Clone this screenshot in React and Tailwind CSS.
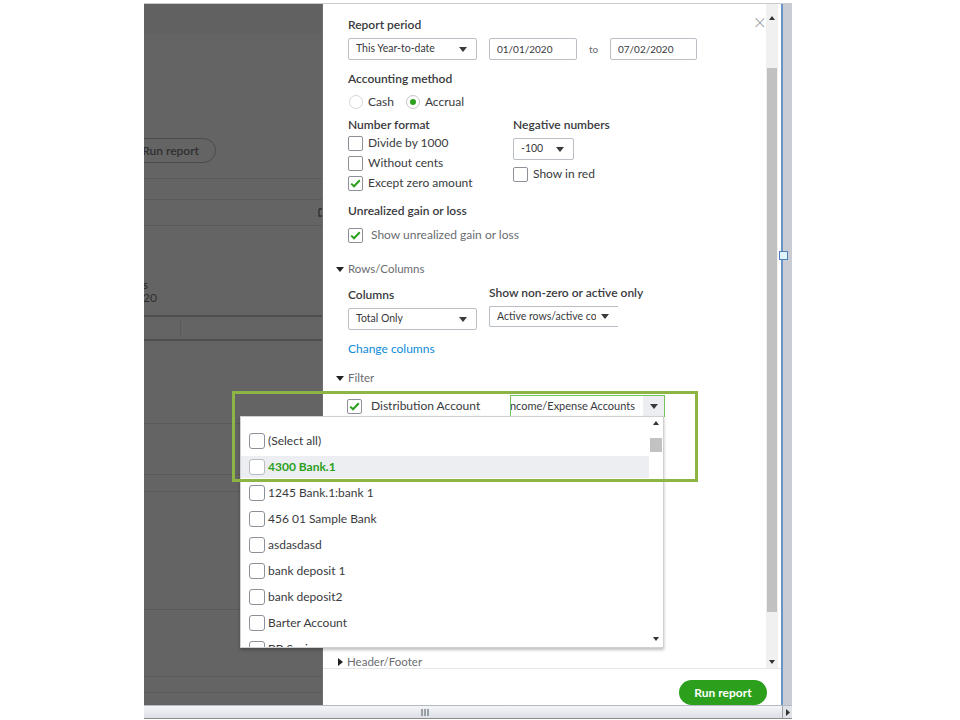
import React from "react"

const Caret = ({ color = "#393a3d" }) => (
  <svg width="8" height="5" viewBox="0 0 8 5" className="shrink-0">
    <path d="M0 0h8L4 5z" fill={color} />
  </svg>
)

const Check = ({ checked }) => (
  <span className="w-[15px] h-[15px] shrink-0 rounded-[2px] border border-[#8d9096] bg-white flex items-center justify-center">
    {checked && (
      <svg width="11" height="9" viewBox="0 0 11 9">
        <path d="M1.2 4.6 L4 7.3 L9.8 1.2" fill="none" stroke="#2ca01c" strokeWidth="2" />
      </svg>
    )}
  </span>
)

const Select = ({ label, className = "" }) => (
  <div className={`h-[22px] border border-[#babec5] rounded-[2px] bg-white flex items-center justify-between pl-[7px] pr-[9px] text-[10.5px] text-[#393a3d] ${className}`}>
    <span className="whitespace-nowrap overflow-hidden">{label}</span>
    <Caret />
  </div>
)

const Label = ({ children, className = "" }) => (
  <div className={`h-[14px] leading-[14px] text-[12px] font-semibold text-[#393a3d] whitespace-nowrap ${className}`}>{children}</div>
)

const CheckRow = ({ label, checked, className = "", textClass = "text-[#393a3d]" }) => (
  <div className={`flex items-center gap-[5px] ${className}`}>
    <Check checked={checked} />
    <span className={`text-[12px] whitespace-nowrap ${textClass}`}>{label}</span>
  </div>
)

const accounts = [
  "(Select all)",
  "4300 Bank.1",
  "1245 Bank.1:bank 1",
  "456 01 Sample Bank",
  "asdasdasd",
  "bank deposit 1",
  "bank deposit2",
  "Barter Account",
  "BB Savings",
]

export default function App() {
  return (
    <div className="relative w-[960px] h-[720px] bg-white overflow-hidden pl-[144px] pt-[3px] font-['Lato','Open_Sans',sans-serif]">
      {/* captured window */}
      <div className="w-[648px] flex flex-col border-t border-[#c9cbcf]">
        <div className="h-[701px] flex">
          {/* dimmed report behind the panel */}
          <div className="w-[178px] bg-[#646464] flex flex-col overflow-hidden text-[#2f2f2f]">
            <div className="h-[134px] border-t-[30px] border-[#616161]" />
            <div className="h-[25px] w-[96px] -ml-[24px] rounded-full border border-[#4b4b4b] flex items-center justify-end pr-[16px] text-[12px] font-semibold whitespace-nowrap">
              Run report
            </div>
            <div className="h-[16px] border-b border-[#5a5a5a]" />
            <div className="h-[21px] border-b border-[#5a5a5a]" />
            <div className="h-[26px] border-b border-[#5a5a5a] flex items-center justify-end -mr-[6px]">
              <svg width="10" height="9" viewBox="0 0 10 9">
                <path d="M1 1h5M1 1v7h7V5M5 5l4-4M6 1h3v3" fill="none" stroke="#2f2f2f" strokeWidth="1.3" />
              </svg>
            </div>
            <div className="h-[91px] border-b-2 border-[#4e4e4e] flex flex-col pt-[52px] text-[12px] leading-[13px]">
              <div className="-ml-[80px] w-[84px] text-right whitespace-nowrap font-semibold">Transactions</div>
              <div className="-ml-[80px] w-[93px] text-right whitespace-nowrap">07/02/2020</div>
            </div>
            <div className="h-[24px] border-b-2 border-[#4e4e4e] flex">
              <div className="w-[37px] border-r border-[#5a5a5a] my-[2px]" />
            </div>
            <div className="h-[83px] border-b border-[#5a5a5a]" />
            <div className="h-[51px] border-b border-[#5a5a5a]" />
            <div className="h-[17px] border-b border-[#5a5a5a]" />
            <div className="h-[118px] border-b border-[#5a5a5a]" />
            <div className="h-[67px] border-b border-[#5a5a5a]" />
            <div className="h-[16px] border-b border-[#5a5a5a]" />
          </div>

          {/* customize panel */}
          <div className="w-[459px] flex flex-col bg-white border-l border-[#6f6f6f]">
            <div className="h-[664px] flex">
              <div className="relative w-[443px] overflow-hidden pl-[25px] pt-[14px] flex flex-col">
                <div className="absolute right-0 top-[7px] text-[21px] leading-[21px] font-light text-[#8d9096]">×</div>

                <Label>Report period</Label>
                <div className="mt-[6px] flex items-center">
                  <Select label="This Year-to-date" className="w-[129px]" />
                  <div className="ml-[12px] w-[88px] h-[22px] border border-[#babec5] rounded-[2px] flex items-center pl-[7px] text-[10px] text-[#393a3d]">01/01/2020</div>
                  <div className="w-[33px] text-center text-[10px] text-[#6b6c72]">to</div>
                  <div className="w-[87px] h-[22px] border border-[#babec5] rounded-[2px] flex items-center pl-[7px] text-[10px] text-[#393a3d]">07/02/2020</div>
                </div>

                <Label className="mt-[12px]">Accounting method</Label>
                <div className="mt-[8px] h-[16px] flex items-center text-[12px] text-[#393a3d]">
                  <span className="ml-px w-[14px] h-[14px] rounded-full border border-[#d4d7dc]" />
                  <span className="ml-[5px]">Cash</span>
                  <span className="ml-[12px] w-[14px] h-[14px] rounded-full border border-[#c4c7cc] flex items-center justify-center">
                    <span className="w-[6px] h-[6px] rounded-full bg-[#2ca01c]" />
                  </span>
                  <span className="ml-[5px]">Accrual</span>
                </div>

                <div className="mt-[8px] flex">
                  <div className="w-[165px] flex flex-col">
                    <Label>Number format</Label>
                    <CheckRow className="mt-px h-[20px]" label="Divide by 1000" />
                    <CheckRow className="h-[20px]" label="Without cents" />
                    <CheckRow className="h-[20px]" label="Except zero amount" checked />
                  </div>
                  <div className="flex flex-col">
                    <Label>Negative numbers</Label>
                    <Select label="-100" className="mt-[6px] w-[61px]" />
                    <CheckRow className="mt-[5px]" label="Show in red" />
                  </div>
                </div>

                <Label className="mt-[11px]">Unrealized gain or loss</Label>
                <CheckRow className="mt-[9px] h-[16px] gap-[8px]" label="Show unrealized gain or loss" checked textClass="text-[#6b6c72]" />

                <div className="mt-[19px] h-[14px] -ml-[12px] flex items-center gap-[4px] text-[11.5px] text-[#6b6c72]">
                  <Caret color="#222" />
                  <span>Rows/Columns</span>
                </div>

                <div className="mt-[11px] flex">
                  <div className="w-[141px] flex flex-col">
                    <Label className="mt-px">Columns</Label>
                    <Select label="Total Only" className="mt-[6px] w-[129px]" />
                  </div>
                  <div className="flex flex-col">
                    <Label className="-mt-px">Show non-zero or active only</Label>
                    <div className="mt-[6px] w-[129px] h-[21px] border border-r-0 border-[#babec5] rounded-l-[2px] flex items-center pl-[7px] text-[10.5px] text-[#393a3d]">
                      <span className="w-[99px] whitespace-nowrap overflow-hidden">Active rows/active columns</span>
                      <span className="ml-[5px]"><Caret /></span>
                    </div>
                  </div>
                </div>

                <div className="mt-[12px] h-[14px] leading-[14px] text-[12px] text-[#0d8ad8]">Change columns</div>

                <div className="mt-[15px] h-[14px] -ml-[12px] flex items-center gap-[4px] text-[11.5px] text-[#6b6c72]">
                  <Caret color="#222" />
                  <span>Filter</span>
                </div>

                <div className="mt-[10px] h-[22px] flex items-center -ml-px">
                  <Check checked />
                  <span className="ml-[9px] w-[139px] text-[12px] text-[#393a3d] whitespace-nowrap">Distribution Account</span>
                  <div className="w-[155px] h-[22px] border border-[#74c45a] flex bg-white">
                    <div className="flex-1 overflow-hidden flex items-center justify-end pr-[8px] text-[11px] text-[#393a3d] whitespace-nowrap">
                      <span className="shrink-0">Income/Expense Accounts</span>
                    </div>
                    <div className="w-[21px] bg-[#eceef1] flex items-center justify-center">
                      <Caret />
                    </div>
                  </div>
                </div>
                <div className="mt-[9px] ml-[292px] w-[46px] h-px bg-[#d4d7dc]" />

                <div className="mt-[229px] h-[14px] -ml-[10px] flex items-center gap-[4px] text-[11.5px] text-[#6b6c72]">
                  <svg width="5" height="8" viewBox="0 0 5 8"><path d="M0 0l5 4-5 4z" fill="#222" /></svg>
                  <span>Header/Footer</span>
                </div>
              </div>

              {/* panel scrollbar */}
              <div className="w-[12px] bg-[#f0f0f0] flex flex-col items-center">
                <div className="h-[64px] pt-[12px]">
                  <svg width="6" height="4" viewBox="0 0 6 4"><path d="M0 4h6L3 0z" fill="#333" /></svg>
                </div>
                <div className="w-[10px] h-[544px] bg-[#c1c1c1]" />
                <div className="flex-1 flex items-end pb-[4px]">
                  <svg width="6" height="4" viewBox="0 0 6 4"><path d="M0 0h6L3 4z" fill="#333" /></svg>
                </div>
              </div>
              <div className="w-[3px]" />
            </div>

            <div className="h-[37px] border-t border-[#e6e7ea] flex justify-end items-start pt-[11px] pr-[14px]">
              <div className="w-[88px] h-[25px] rounded-full bg-[#2ca01c] flex items-center justify-center text-[12px] font-bold text-white">
                Run report
              </div>
            </div>
          </div>

          {/* window splitter */}
          <div className="w-[2px] bg-[#6a93c8]" />
          <div className="w-[9px] bg-[#c9ccd3]" />
        </div>

        {/* horizontal scrollbar */}
        <div className="h-[14px] flex border-t border-[#b5bac2] border-b border-b-[#8c8c8c]">
          <div className="w-[638px] bg-gradient-to-b from-[#f4f5f7] to-[#dde0e5] flex items-center pl-[277px]">
            <div className="w-[8px] h-[7px] border-x-2 border-[#9aa0a8] flex justify-center">
              <div className="w-[2px] border-x border-[#9aa0a8]" />
            </div>
          </div>
          <div className="w-[10px] bg-[#dfe2e6] border-l border-[#9aa0a8] flex items-center justify-center">
            <svg width="4" height="7" viewBox="0 0 4 7"><path d="M0 0l4 3.5L0 7z" fill="#333" /></svg>
          </div>
        </div>
      </div>

      {/* splitter handle */}
      <div className="absolute left-[779px] top-[251px] w-[9px] h-[9px] border border-[#4f7fbf] bg-[#def4ff]" />

      {/* open account dropdown */}
      <div className="absolute left-[240px] top-[416px] w-[424px] h-[232px] bg-white border border-[#cfd1d4] shadow-[0_2px_3px_rgba(0,0,0,0.25)] flex z-10">
        <div className="flex-1 overflow-hidden flex flex-col">
          <div className="mt-[7px] mx-[7px] h-px bg-[#d4d7dc]" />
          <div className="mt-[6px] flex flex-col gap-[4px]">
            {accounts.map((name, i) => (
              <div
                key={name}
                className={`h-[22px] shrink-0 flex items-center pl-[8px] gap-[3px] text-[12px] ${i === 1 ? "bg-[#eceef1] text-[#2ca01c] font-bold" : "text-[#393a3d]"}`}
              >
                <span className={`w-[16px] h-[16px] rounded-[3px] border ${i === 1 ? "border-[#b9bcc1]" : "border-[#8d9096]"} bg-white`} />
                <span>{name}</span>
              </div>
            ))}
          </div>
        </div>
        <div className="w-[14px] flex flex-col items-center">
          <div className="pt-[4px] h-[21px]">
            <svg width="6" height="4" viewBox="0 0 6 4"><path d="M0 4h6L3 0z" fill="#333" /></svg>
          </div>
          <div className="w-[12px] h-[14px] bg-[#c2c2c2]" />
          <div className="flex-1 flex items-end pb-[6px]">
            <svg width="6" height="4" viewBox="0 0 6 4"><path d="M0 0h6L3 4z" fill="#333" /></svg>
          </div>
        </div>
      </div>

      {/* highlight frame */}
      <div className="absolute left-[232px] top-[391px] w-[466px] h-[91px] border-[3px] border-[#8db545] z-20 pointer-events-none" />
    </div>
  )
}
